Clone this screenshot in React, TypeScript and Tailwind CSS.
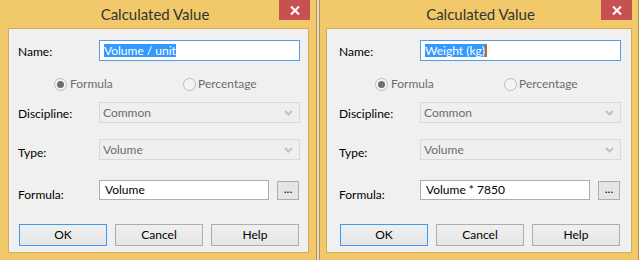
import React from "react";

const Chevron = () => (
    <svg width="9" height="6" viewBox="0 0 9 6" fill="none">
        <path d="M1 1L4.5 4.5L8 1" stroke="#c2c2c2" strokeWidth="2" />
    </svg>
);

const CloseX = () => (
    <svg width="10" height="9" viewBox="0 0 10 9" fill="none">
        <path d="M1 0.5L9 8.5M9 0.5L1 8.5" stroke="white" strokeWidth="2" />
    </svg>
);

function Radio({ checked }: { checked?: boolean }) {
    return (
        <span className="flex h-[13px] w-[13px] items-center justify-center rounded-full border border-[#bcbcbc] bg-[#f4f4f4]">
            {checked && <span className="h-[7px] w-[7px] rounded-full bg-[#6e6e6e]" />}
        </span>
    );
}

function Select({ value }: { value: string }) {
    return (
        <div className="flex h-[21px] w-[201px] items-center justify-between border border-[#d9d9d9] bg-[#efefef] pl-[3px] pr-[6px] text-[#6d6d6d]">
            <span>{value}</span>
            <Chevron />
        </div>
    );
}

function Button({ label, primary }: { label: string; primary?: boolean }) {
    return (
        <div
            className={`flex h-[22px] w-[88px] items-center justify-center border bg-[linear-gradient(to_bottom,#f0f0f0,#e5e5e5)] text-black ${
                primary ? "border-[#3c9be8]" : "border-[#adadad]"
            }`}
        >
            {label}
        </div>
    );
}

type DialogProps = {
    first?: boolean;
    name: string;
    formula: string;
    caret?: boolean;
};

function Dialog({ first, name, formula, caret }: DialogProps) {
    return (
        <div
            className={`relative flex h-[260px] flex-col border-r border-[#b39447] bg-[#f1c96b] ${
                first ? "w-[317px] pl-[8px] pr-[7px]" : "w-[320px] border-l px-[6px]"
            }`}
        >
            {/* title bar */}
            <div className={`flex h-[28px] items-center justify-center text-[15px] font-normal text-[#333333] ${first ? "pr-[7px]" : "pl-[3px]"}`}>
                Calculated Value
            </div>
            <div className="absolute right-[6px] top-0 flex h-[20px] w-[31px] items-center justify-center bg-[#c75050]">
                <CloseX />
            </div>

            {/* client area */}
            <div className={`flex h-[225px] flex-col border border-[#d5ab55] bg-[#f0f0f0] text-[12px] text-black ${first ? "pl-[9px]" : "pl-[12px]"}`}>
                <div className="mt-[11px] flex h-[21px] items-center">
                    <span className="w-[81px] pt-[3px]">Name:</span>
                    <div className="flex h-[21px] w-[201px] items-center border border-[#569de5] bg-white pl-[4px]">
                        <span className="bg-[#3399ff] leading-[13px] text-white">{name}</span>
                        {caret && <span className="h-[13px] w-[2px] bg-[#c8661a]" />}
                    </div>
                </div>

                <div className="mt-[15px] flex h-[16px] items-center pl-[36px] text-[#6d6d6d]">
                    <div className="flex w-[129px] items-center gap-[3px]">
                        <Radio checked />
                        <span>Formula</span>
                    </div>
                    <div className="flex items-center gap-[2px]">
                        <Radio />
                        <span>Percentage</span>
                    </div>
                </div>

                <div className="mt-[10px] flex items-center">
                    <span className="w-[81px] pt-[2px]">Discipline:</span>
                    <Select value="Common" />
                </div>

                <div className="mt-[14px] flex items-center">
                    <span className="w-[81px] pt-[7px]">Type:</span>
                    <Select value="Volume" />
                </div>

                <div className="mt-[18px] flex h-[20px] items-center">
                    <span className="w-[81px] pt-[9px]">Formula:</span>
                    <div className="flex h-[20px] w-[170px] items-center border border-[#abadb3] bg-white pl-[5px]">{formula}</div>
                    <div className="ml-[8px] flex h-[19px] w-[22px] items-center justify-center border border-[#adadad] bg-[#e5e5e5] pb-[3px] leading-none">
                        ...
                    </div>
                </div>

                <div className="mt-[24px] flex gap-[8px] pl-[1px]">
                    <Button label="OK" primary />
                    <Button label="Cancel" />
                    <Button label="Help" />
                </div>
            </div>
        </div>
    );
}

export default function App() {
    return (
        <div className="flex h-[260px] w-[639px] gap-[2px] overflow-hidden bg-[#e4ddd0] font-['Lato',sans-serif]">
            <Dialog first name="Volume / unit" formula="Volume" />
            <Dialog name="Weight (kg)" formula="Volume * 7850" caret />
        </div>
    );
}
